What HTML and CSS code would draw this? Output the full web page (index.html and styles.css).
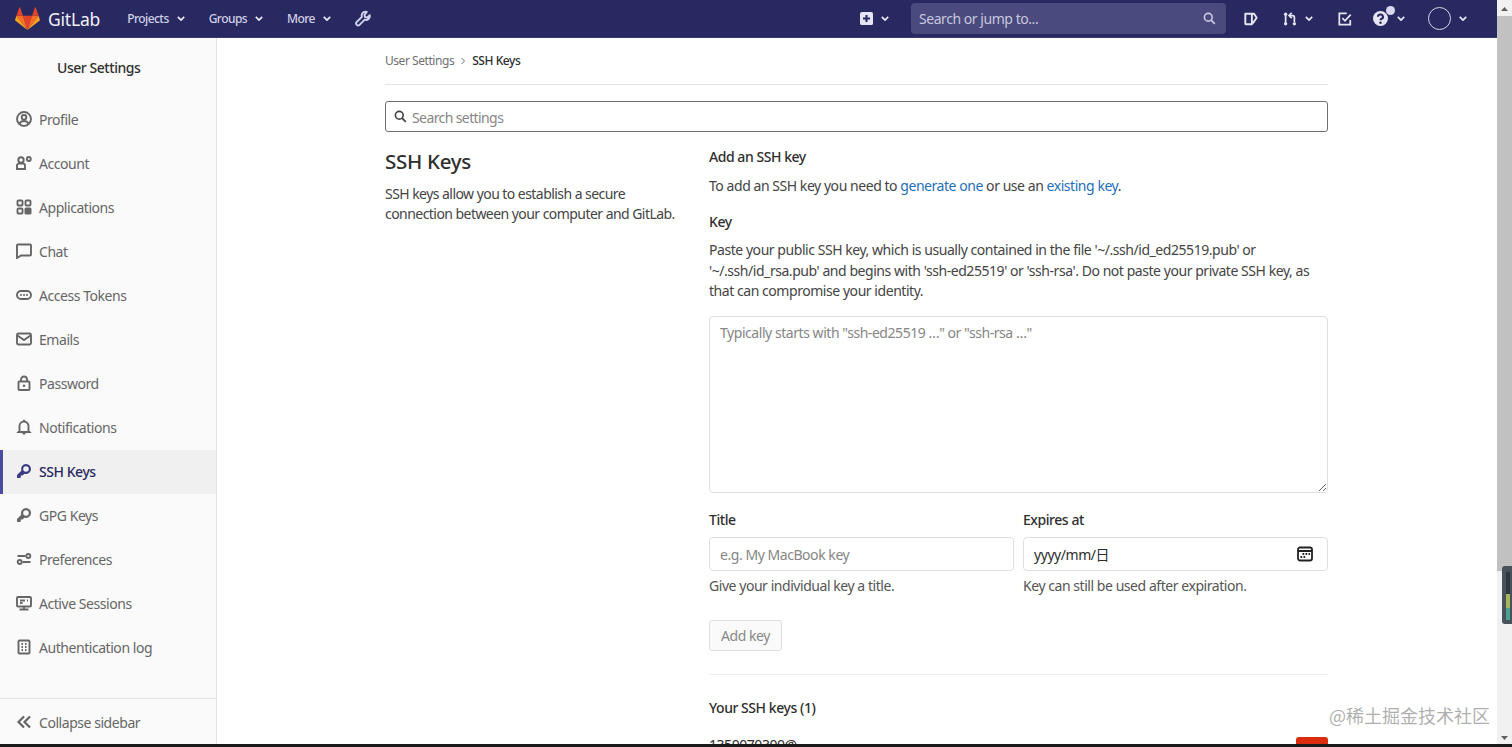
FILE: index.html
```html
<!DOCTYPE html>
<html lang="en">
<head>
<meta charset="utf-8">
<title>SSH Keys · User Settings · GitLab</title>
<link rel="stylesheet" href="styles.css">
</head>
<body>
<div class="window">
  <div class="page">
    <header class="topbar">
      <a class="logo">
        <svg class="logo-mark" viewBox="0 0 26 24"><path fill="#e24329" d="M13 24 17.800 9H8.200z"/><path fill="#fc6d26" d="M13 24 8.200 9H1.400z"/><path fill="#fca326" d="M1.400 9 .1 13.400c-.1.400 0 .8.400 1L13 24z"/><path fill="#e24329" d="M1.400 9h6.800L5.300.6c-.1-.4-.7-.4-.9 0z"/><path fill="#fc6d26" d="M13 24 17.800 9h6.800z"/><path fill="#fca326" d="M24.600 9 25.900 13.400c.1.400 0 .8-.4 1L13 24z"/><path fill="#e24329" d="M24.600 9h-6.800L20.700.6c.1-.4.700-.4.900 0z"/></svg>
        <span class="logo-text">GitLab</span>
      </a>
      <nav class="main-nav">
        <a class="nav-link">Projects <svg class="chev" viewBox="0 0 10 6"><path d="M1 1l4 4 4-4"/></svg></a>
        <a class="nav-link">Groups <svg class="chev" viewBox="0 0 10 6"><path d="M1 1l4 4 4-4"/></svg></a>
        <a class="nav-link">More <svg class="chev" viewBox="0 0 10 6"><path d="M1 1l4 4 4-4"/></svg></a>
        <svg class="ico-top wrench" viewBox="0 0 16 16"><path fill="none" stroke="#d1d0e8" stroke-width="1.900" stroke-linejoin="round" d="M10.200 1.300a3.700 3.700 0 0 0-3.300 5L1.700 11.500a1.900 1.900 0 0 0 2.800 2.800l5.200-5.200a3.700 3.700 0 0 0 5-4.400l-2.500 2.400-2.200-.6-.6-2.200L11.800 1.500a3.700 3.700 0 0 0-1.600-.2z"/></svg>
      </nav>
      <div class="right-nav">
        <svg class="ico-top plus" viewBox="0 0 14 14"><rect width="14" height="14" rx="2" fill="#e6e5f2"/><path d="M7 3.200v7.600M3.200 7h7.600" stroke="#292961" stroke-width="2.200"/></svg>
        <svg class="chev chev-plus" viewBox="0 0 10 6"><path d="M1 1l4 4 4-4"/></svg>
        <div class="top-search">
          <span>Search or jump to...</span>
          <svg class="top-search-ico" viewBox="0 0 16 16"><circle cx="6.500" cy="6.500" r="4.800" fill="none" stroke="#c9c8df" stroke-width="2"/><path d="M10 10l4.500 4.500" stroke="#c9c8df" stroke-width="2.200"/></svg>
        </div>
        <svg class="ico-top issues" viewBox="0 0 16 16"><path fill="none" stroke="#e6e5f2" stroke-width="2.200" stroke-linejoin="round" d="M1.500 2h7.500v12H2.500a1 1 0 0 1-1-1zM9 2h2.500l3 4.500L10 13"/></svg>
        <svg class="ico-top mr" viewBox="0 0 16 16"><g fill="none" stroke="#e6e5f2" stroke-width="2"><path d="M3 3.500v9"/><path d="M13 12V6a2 2 0 0 0-2-2H8"/><path d="M10 1 7 4l3 3"/></g><circle cx="3" cy="2.500" r="1.900" fill="#e6e5f2"/><circle cx="3" cy="13.500" r="1.900" fill="#e6e5f2"/><circle cx="13" cy="13.500" r="1.900" fill="#e6e5f2"/></svg>
        <svg class="chev chev-gap" viewBox="0 0 10 6"><path d="M1 1l4 4 4-4"/></svg>
        <svg class="ico-top todo" viewBox="0 0 16 16"><path fill="none" stroke="#e6e5f2" stroke-width="2" d="M14 9v5.500H1.500v-13H10M5 7l3 3 6.500-7"/></svg>
        <span class="help-wrap">
          <svg class="ico-top help" viewBox="0 0 16 16"><circle cx="8" cy="8" r="8" fill="#e6e5f2"/><path fill="none" stroke="#292961" stroke-width="2.200" d="M5.300 6.200a2.700 2.400 0 1 1 3.900 2.100c-.8.400-1.200.9-1.200 1.500"/><circle cx="8" cy="12.600" r="1.300" fill="#292961"/></svg>
          <span class="help-dot"></span>
        </span>
        <svg class="chev chev-help" viewBox="0 0 10 6"><path d="M1 1l4 4 4-4"/></svg>
        <span class="avatar"></span>
        <svg class="chev chev-gap" viewBox="0 0 10 6"><path d="M1 1l4 4 4-4"/></svg>
      </div>
    </header>

    <div class="body-row">
      <aside class="sidebar">
        <div class="side-title">User Settings</div>
        <ul class="side-list">
          <li class="side-item"><svg class="si" viewBox="0 0 16 16"><circle cx="8" cy="8" r="7" class="ln"/><circle cx="8" cy="6.300" r="2.300" class="ln"/><path d="M3.500 13c.6-2 2.300-3 4.500-3s3.900 1 4.500 3" class="ln"/></svg>Profile</li>
          <li class="side-item"><svg class="si" viewBox="0 0 16 16"><circle cx="5" cy="5" r="2.700" class="ln"/><path d="M1 14V10.500a2 2 0 0 1 2-2h4a2 2 0 0 1 2 2V14z" class="ln"/><circle cx="12.800" cy="4" r="2.900" class="fl"/><circle cx="12.800" cy="4" r="1" fill="#fafafa"/></svg>Account</li>
          <li class="side-item"><svg class="si" viewBox="0 0 16 16"><g class="ln"><rect x="1.500" y="1.500" width="5" height="5" rx="1"/><rect x="9.500" y="1.500" width="5" height="5" rx="1"/><rect x="1.500" y="9.500" width="5" height="5" rx="1"/></g><rect x="8.500" y="8.500" width="7" height="7" rx="1.500" class="fl"/></svg>Applications</li>
          <li class="side-item"><svg class="si" viewBox="0 0 16 16"><path d="M1 2.500a1 1 0 0 1 1-1h12a1 1 0 0 1 1 1v9a1 1 0 0 1-1 1H5L1 15z" class="ln"/></svg>Chat</li>
          <li class="side-item"><svg class="si" viewBox="0 0 16 16"><rect x="1" y="4" width="14" height="8" rx="4" class="ln"/><circle cx="5" cy="8" r="1" class="fl"/><circle cx="8" cy="8" r="1" class="fl"/><circle cx="11" cy="8" r="1" class="fl"/></svg>Access Tokens</li>
          <li class="side-item"><svg class="si" viewBox="0 0 16 16"><rect x="1" y="2.500" width="14" height="11" rx="1.500" class="ln"/><path d="M1.500 4.500 8 9l6.500-4.500" class="ln"/></svg>Emails</li>
          <li class="side-item"><svg class="si" viewBox="0 0 16 16"><rect x="2.500" y="6.500" width="11" height="8.500" rx="1" class="ln"/><path d="M5 6.500V4.500a3 3 0 0 1 6 0v2" class="ln"/><circle cx="8" cy="10.700" r="1.300" class="fl"/></svg>Password</li>
          <li class="side-item"><svg class="si" viewBox="0 0 16 16"><path d="M3.500 12V7a4.500 4.500 0 0 1 9 0v5l1 1h-11z" class="ln"/><path d="M6.500 14.500h3" class="ln"/><path d="M8 .8v1.700" class="ln"/></svg>Notifications</li>
          <li class="side-item is-active"><svg class="si" viewBox="0 0 16 16"><path d="M10 1a5 5 0 0 0-4.700 6.700L1 12v3h3l.8-.8v-1.700h1.700l1.800-1.800A5 5 0 1 0 10 1zm0 2.200a2.800 2.800 0 1 1 0 5.600 2.800 2.800 0 0 1 0-5.600z" class="fl"/></svg>SSH Keys</li>
          <li class="side-item"><svg class="si" viewBox="0 0 16 16"><path d="M10 1a5 5 0 0 0-4.700 6.700L1 12v3h3l.8-.8v-1.700h1.700l1.800-1.800A5 5 0 1 0 10 1zm0 2.200a2.800 2.800 0 1 1 0 5.600 2.800 2.800 0 0 1 0-5.600z" class="fl"/></svg>GPG Keys</li>
          <li class="side-item"><svg class="si" viewBox="0 0 16 16"><path d="M1.500 5h8M6.500 11h8" class="ln"/><circle cx="12.300" cy="5" r="2" class="ln"/><circle cx="3.700" cy="11" r="2" class="ln"/></svg>Preferences</li>
          <li class="side-item"><svg class="si" viewBox="0 0 16 16"><rect x="1" y="2" width="14" height="9.500" rx="1" class="ln"/><path d="M8 11.500v2.500M3.500 14.500h9M4 5.500h5M4 8h2.500M11 5.500h1" class="ln"/></svg>Active Sessions</li>
          <li class="side-item"><svg class="si" viewBox="0 0 16 16"><rect x="2.500" y="1.500" width="11" height="13" rx="1" class="ln"/><path d="M5.500 5h1.500M9 5h1.500M5.500 8h1.500M9 8h1.500M5.500 11h1.500M9 11h1.500" class="ln"/></svg>Authentication log</li>
        </ul>
        <div class="collapse"><svg class="si" viewBox="0 0 16 16"><path d="M8 2.500 2.500 8 8 13.500M14 2.500 8.500 8l5.500 5.500" class="ln ln-thick"/></svg>Collapse sidebar</div>
      </aside>

      <main class="main">
        <div class="container">
          <nav class="crumbs"><span>User Settings</span><svg class="crumb-sep" viewBox="0 0 6 8"><path d="M1.500 1l3 3-3 3"/></svg><strong>SSH Keys</strong></nav>
          <div class="search-settings">
            <svg class="search-ico" viewBox="0 0 16 16"><circle cx="6.500" cy="6.500" r="4.800" fill="none" stroke="#444" stroke-width="2"/><path d="M10 10l4.500 4.500" stroke="#444" stroke-width="2.200"/></svg>
            <input class="search-input" type="text" placeholder="Search settings">
          </div>
          <div class="settings-grid">
            <section class="intro">
              <h1>SSH Keys</h1>
              <p>SSH keys allow you to establish a secure<br>connection between your computer and GitLab.</p>
            </section>
            <section class="content">
              <h2 class="add-title">Add an SSH key</h2>
              <p class="add-text">To add an SSH key you need to <a>generate one</a> or use an <a>existing key</a>.</p>
              <h2 class="key-title">Key</h2>
              <p class="key-text">Paste your public SSH key, which is usually contained in the file '~/.ssh/id_ed25519.pub' or<br>'~/.ssh/id_rsa.pub' and begins with 'ssh-ed25519' or 'ssh-rsa'. Do not paste your private SSH key, as<br>that can compromise your identity.</p>
              <textarea class="key-area" placeholder="Typically starts with &quot;ssh-ed25519 …&quot; or &quot;ssh-rsa …&quot;"></textarea>
              <div class="field-row">
                <div class="field">
                  <label>Title</label>
                  <input class="text-input" type="text" placeholder="e.g. My MacBook key">
                  <small>Give your individual key a title.</small>
                </div>
                <div class="field">
                  <label>Expires at</label>
                  <div class="date-input"><span>yyyy/mm/日</span>
                    <svg class="cal" viewBox="0 0 16 16"><rect x="1" y="1.500" width="14" height="13" rx="2" fill="none" stroke="#222" stroke-width="1.800"/><path d="M1 5h14" stroke="#222" stroke-width="2"/><path d="M5.500 8h1.700M8.500 8h1.700M11.500 8h1.500M3.500 11h1.700M6.500 11h1.700" stroke="#222" stroke-width="1.800"/></svg>
                  </div>
                  <small>Key can still be used after expiration.</small>
                </div>
              </div>
              <button class="add-btn" type="button">Add key</button>
              <hr class="divider">
              <h2 class="keys-title">Your SSH keys (1)</h2>
              <div class="key-row"><span class="key-name">1350070300@</span><span class="del-btn"></span></div>
            </section>
          </div>
        </div>
      </main>
    </div>
  </div>

  <div class="scrollbar">
    <svg class="sb-arrow" viewBox="0 0 9 6"><path d="M4.500 1 8 5H1z"/></svg>
    <div class="sb-thumb"></div>
    <div class="sb-spacer"></div>
    <svg class="sb-arrow" viewBox="0 0 9 6"><path d="M1 1h7L4.500 5z"/></svg>
    <div class="meter"><i class="m-dark"></i><i class="m-yellow"></i><i class="m-green"></i></div>
  </div>

  <div class="watermark">@稀土掘金技术社区</div>
  <div class="screen-edge"></div>
</div>
</body>
</html>
```
FILE: styles.css
```css
* { box-sizing: border-box; }
html, body { margin: 0; height: 100%; overflow: hidden; }
body {
  font-family: "Noto Sans", "Open Sans", "Noto Sans CJK SC", sans-serif;
  font-size: 14px;
  letter-spacing: -0.45px;
  color: #2e2e2e;
  background: #fff;
}
.window { position: relative; display: flex; height: 747px; width: 1512px; overflow: hidden; }
.page { flex: 1; min-width: 0; display: flex; flex-direction: column; }

/* top bar */
.topbar { height: 38px; flex: none; background: #292961; display: flex; align-items: center; padding-left: 15px; color: #d1d0e8; border-bottom: 1px solid #3a3a72; }
.logo { display: flex; align-items: center; }
.logo-mark { width: 25px; height: 23px; }
.logo-text { margin-left: 8px; font-size: 17.5px; color: #f1f1f8; letter-spacing: -0.2px; }
.main-nav { display: flex; align-items: center; margin-left: 27px; gap: 24px; }
.nav-link { display: flex; align-items: center; font-size: 12px; font-weight: 500; letter-spacing: -0.55px; }
.nav-link .chev { margin-left: 8px; }
.chev { width: 8px; height: 5px; flex: none; fill: none; stroke: #e6e5f2; stroke-width: 2.200; }
.ico-top { flex: none; display: block; }
.wrench { width: 16px; height: 17px; }
.right-nav { margin-left: auto; margin-right: 30px; display: flex; align-items: center; }
.plus { width: 13px; height: 13px; }
.chev-plus { margin-left: 8px; }
.top-search { width: 315px; height: 31px; margin-left: 22px; background: #4a4a7f; border-radius: 4px; display: flex; align-items: center; justify-content: space-between; padding: 0 10px 0 8px; font-size: 14px; color: #c8c7de; }
.top-search-ico { width: 13px; height: 13px; }
.issues { width: 14px; height: 14px; margin-left: 18px; }
.mr { width: 14px; height: 14px; margin-left: 25px; }
.chev-gap { margin-left: 8px; }
.todo { width: 14px; height: 14px; margin-left: 25px; }
.help-wrap { position: relative; margin-left: 21px; display: block; width: 15px; height: 15px; }
.help { width: 15px; height: 15px; }
.help-dot { position: absolute; top: -5px; right: -7px; width: 9px; height: 9px; border-radius: 50%; background: #d9d8f0; }
.chev-help { margin-left: 9px; }
.avatar { width: 23px; height: 23px; margin-left: 23px; border-radius: 50%; border: 1px solid #d8d7ea; }

/* sidebar */
.body-row { flex: 1; min-height: 0; display: flex; }
.sidebar { width: 217px; flex: none; background: #fafafa; border-right: 1px solid #e5e5e5; display: flex; flex-direction: column; color: #666; }
.side-title { height: 60px; padding: 20px 0 0 57px; font-size: 14px; line-height: 20px; font-weight: 500; color: #303030; }
.side-list { list-style: none; margin: 0; padding: 0; flex: 1; }
.side-item { height: 44px; display: flex; align-items: center; padding: 0 0 2px 16px; }
.si { width: 16px; height: 16px; margin-right: 7px; flex: none; }
.ln { fill: none; stroke: #666; stroke-width: 1.900; }
.ln-thick { stroke-width: 2.200; }
.fl { fill: #666; }
.is-active { background: #f0f0f0; box-shadow: inset 3px 0 0 #4b4ba3; color: #292961; font-weight: 500; }
.is-active .fl { fill: #3a3a85; }
.collapse { height: 49px; border-top: 1px solid #e5e5e5; display: flex; align-items: center; padding: 0 0 2px 16px; }

/* main */
.main { flex: 1; min-width: 0; overflow: hidden; }
.container { width: 943px; margin-left: 168px; }
.crumbs { height: 47px; border-bottom: 1px solid #e5e5e5; display: flex; align-items: center; font-size: 12px; color: #707070; padding-bottom: 1px; letter-spacing: -0.45px; }
.crumbs strong { font-weight: 500; color: #2e2e2e; }
.crumb-sep { width: 6px; height: 8px; margin: 0 6px; fill: none; stroke: #707070; stroke-width: 1; }
.search-settings { margin-top: 16px; height: 31px; border: 1px solid #6e6e6e; border-radius: 3px; display: flex; align-items: center; padding-left: 8px; }
.search-ico { width: 13px; height: 13px; flex: none; }
.search-input { flex: 1; border: 0; outline: 0; background: none; margin-left: 5px; font: inherit; letter-spacing: -0.6px; padding: 2px 0 0; }
.search-input::placeholder { color: #868686; opacity: 1; }
.settings-grid { display: grid; grid-template-columns: 324px 1fr; }
.intro h1 { margin: 15px 0 0; font-size: 20.5px; line-height: 28px; font-weight: 500; color: #2e2e2e; letter-spacing: -0.3px; }
.intro p { margin: 8.500px 0 0; line-height: 20.500px; color: #444; letter-spacing: -0.55px; }
.content { min-width: 0; }
.content h2 { margin: 0; font-size: 14px; font-weight: 500; line-height: 20px; color: #2e2e2e; }
.add-title { padding-top: 15px; }
.add-text { margin: 9px 0 0; line-height: 20px; color: #444; }
.add-text a { color: #1f6fba; }
.key-title { margin-top: 16px !important; }
.key-text { margin: 8px 0 0; line-height: 20.500px; color: #444; }
.key-area { display: block; width: 100%; height: 177px; margin-top: 14px; border: 1px solid #dfdfdf; border-radius: 4px; padding: 6px 10px; font: inherit; letter-spacing: inherit; outline: 0; }
.key-area::placeholder { color: #868686; opacity: 1; }
.field-row { display: grid; grid-template-columns: 305px 305px; gap: 9px; margin-top: 17px; }
.field { display: flex; flex-direction: column; }
.field label { font-weight: 500; line-height: 20px; color: #2e2e2e; }
.text-input, .date-input { height: 34px; margin-top: 7px; border: 1px solid #dfdfdf; border-radius: 4px; font: inherit; letter-spacing: inherit; outline: 0; }
.text-input { padding: 1px 10px 0; }
.text-input::placeholder { color: #868686; opacity: 1; }
.date-input { display: flex; align-items: center; justify-content: space-between; padding: 0 14px 0 10px; }
.cal { width: 16px; height: 16px; }
.field small { font-size: 14px; line-height: 20px; margin-top: 5px; color: #555; }
.add-btn { display: block; margin-top: 24px; width: 73px; height: 31px; padding: 0; background: #fafafa; border: 1px solid #dfdfdf; border-radius: 3px; font: inherit; letter-spacing: inherit; color: #888; }
.divider { border: 0; border-top: 1px solid #efefef; margin: 23px 0 0; }
.keys-title { margin-top: 23px !important; }
.key-row { display: flex; justify-content: space-between; margin-top: 17px; }
.key-name { line-height: 20px; color: #2e2e2e; }
.del-btn { width: 32px; height: 32px; margin-top: 2px; background: #db2c0d; border-radius: 3px; }

/* scrollbar */
.scrollbar { width: 15px; flex: none; background: #f1f1f1; display: flex; flex-direction: column; align-items: center; padding: 6px 0 6px; }
.sb-arrow { width: 9px; height: 6px; fill: #606060; flex: none; }
.sb-thumb { width: 100%; height: 555px; margin-top: 4px; background: #c1c1c1; }
.sb-spacer { flex: 1; }
.meter { position: absolute; left: 1502px; top: 566px; width: 10px; height: 58px; background: #47525a; border-radius: 3px 0 0 3px; padding: 6px 2px 4px 4px; display: flex; flex-direction: column; }
.meter i { display: block; width: 4px; }
.m-dark { height: 22px; background: #2f383e; }
.m-yellow { height: 14px; background: #a9b35b; }
.m-green { height: 12px; background: #4da08f; }

/* overlays */
.watermark { position: absolute; left: 1329px; top: 703px; font-family: "Noto Sans CJK SC", sans-serif; font-size: 18px; line-height: 24px; letter-spacing: 0; color: rgba(120,120,120,.6); }
.screen-edge { position: absolute; left: 0; right: 0; bottom: 0; height: 3px; background: #1a1a1a; }
```
